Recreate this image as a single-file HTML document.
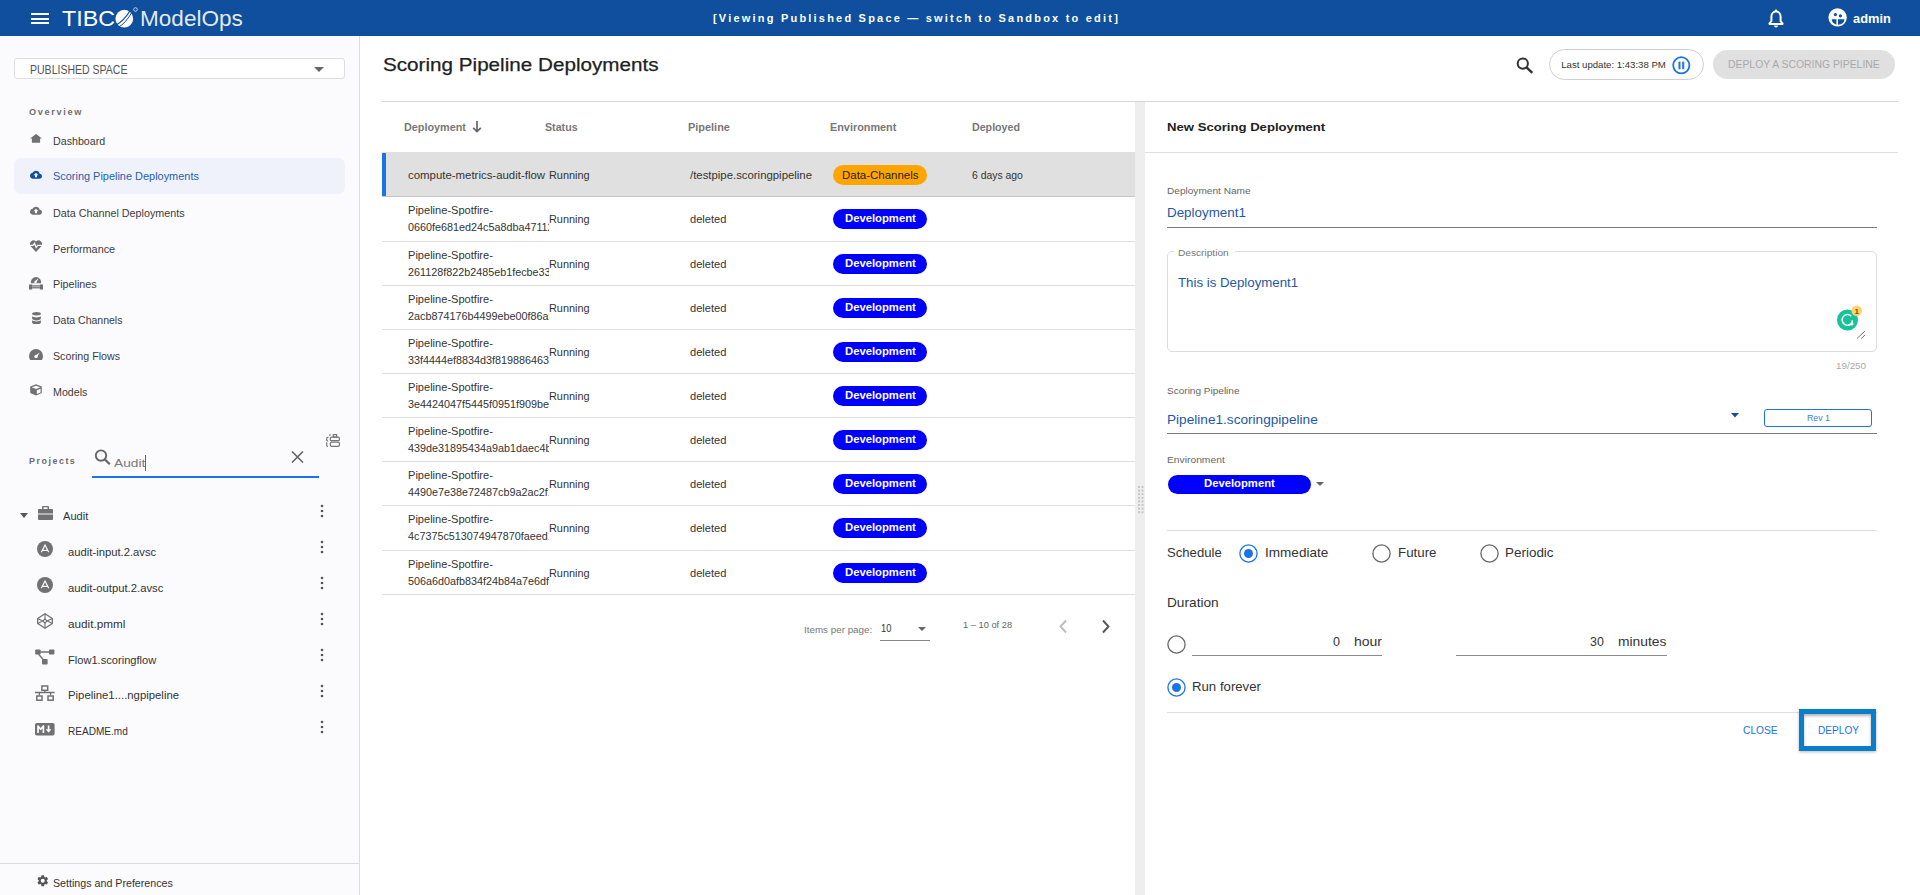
<!DOCTYPE html>
<html><head><meta charset="utf-8"><title>ModelOps</title>
<style>
*{box-sizing:border-box;margin:0;padding:0}
html,body{width:1920px;height:895px;overflow:hidden;background:#fff;font-family:"Liberation Sans",sans-serif;color:#333;position:relative}
.t{position:absolute;white-space:nowrap}
.b{position:absolute}
</style></head><body>
<div class="b" style="left:0;top:0;width:1920px;height:36px;background:#0f4f9e"></div>
<div class="b" style="left:31px;top:12.5px;width:18px;height:2px;background:#fff"></div>
<div class="b" style="left:31px;top:17.5px;width:18px;height:2px;background:#fff"></div>
<div class="b" style="left:31px;top:22px;width:18px;height:2px;background:#fff"></div>
<div class="t" style="left:61.50px;top:7.40px;font-size:22.8px;line-height:22.8px;color:#fff;transform:scaleX(1.0205);transform-origin:0 0;">TIBC</div>
<svg class="b" style="left:112px;top:6px" width="28" height="24" viewBox="0 0 28 24"><circle cx="12.3" cy="12.7" r="8.9" fill="#fff"/><path d="M3.5 19.5 Q12 15 18.5 4" stroke="#0f4f9e" stroke-width="1.3" fill="none"/><path d="M6 21.5 Q14 17 20 6" stroke="#0f4f9e" stroke-width="1" fill="none"/><circle cx="23.5" cy="3.5" r="1.8" fill="none" stroke="#fff" stroke-width="0.7"/></svg>
<div class="t" style="left:140.00px;top:8.08px;font-size:22px;line-height:22px;color:rgba(255,255,255,.9);transform:scaleX(1.0252);transform-origin:0 0;">ModelOps</div>
<div class="t" style="left:712.90px;top:13.64px;font-size:10px;line-height:10px;color:#fff;font-weight:bold;letter-spacing:2.0px;transform:scaleX(1.1008);transform-origin:0 0;">[Viewing Published Space — switch to Sandbox to edit]</div>
<svg class="b" style="left:1768px;top:9px" width="16" height="19" viewBox="0 0 16 19"><path d="M8 2.6c2.8 0 4.6 2.2 4.6 5v4.6l1.9 2.1v.6H1.5v-.6l1.9-2.1V7.6c0-2.8 1.8-5 4.6-5z" stroke="#fff" stroke-width="2" fill="none" stroke-linejoin="round"/><circle cx="8" cy="1.8" r="1.3" fill="#fff"/><path d="M6 16.5h4a2 2 0 0 1-4 0z" fill="#fff"/></svg>
<svg class="b" style="left:1828px;top:8px" width="20" height="20" viewBox="0 0 20 20"><circle cx="9.6" cy="9.4" r="9.2" fill="#fff"/><circle cx="7.4" cy="6.6" r="1.6" fill="#0f4f9e"/><circle cx="12.4" cy="7.8" r="1.6" fill="#0f4f9e"/><path d="M3.6 11.2h13a6.6 6.6 0 0 1-13 0z" fill="#0f4f9e"/><path d="M9.2 11v7" stroke="#fff" stroke-width="1.6"/></svg>
<div class="t" style="left:1853.00px;top:12.00px;font-size:13px;line-height:13px;color:#fff;font-weight:bold;transform:scaleX(0.9874);transform-origin:0 0;">admin</div>
<div class="b" style="left:0;top:36px;width:359px;height:859px;background:#fbfbfd"></div>
<div class="b" style="left:359px;top:36px;width:1px;height:859px;background:#dcdcdc"></div>
<div class="b" style="left:14px;top:58px;width:331px;height:21px;border:1px solid #dedede;border-radius:3px;background:#fff"></div>
<div class="t" style="left:30.00px;top:63.96px;font-size:12.1px;line-height:12.1px;color:#555;transform:scaleX(0.8699);transform-origin:0 0;">PUBLISHED SPACE</div>
<div class="b" style="left:314px;top:67px;width:0;height:0;border-left:5px solid transparent;border-right:5px solid transparent;border-top:5px solid #666"></div>
<div class="t" style="left:29.00px;top:107.34px;font-size:9.4px;line-height:9.4px;color:#707070;font-weight:bold;letter-spacing:1.7px;transform:scaleX(0.9783);transform-origin:0 0;">Overview</div>
<div class="b" style="left:14px;top:158px;width:331px;height:36px;border-radius:7px;background:#f0f2fb"></div>
<div class="t" style="left:53.25px;top:135.73px;font-size:10.6px;line-height:10.6px;color:#3c3c3c;transform:scaleX(1.0076);transform-origin:0 0;">Dashboard</div>
<div class="t" style="left:53.25px;top:171.43px;font-size:10.6px;line-height:10.6px;color:#2660ad;transform:scaleX(1.0324);transform-origin:0 0;">Scoring Pipeline Deployments</div>
<div class="t" style="left:53.25px;top:207.63px;font-size:10.6px;line-height:10.6px;color:#3c3c3c;transform:scaleX(1.0160);transform-origin:0 0;">Data Channel Deployments</div>
<div class="t" style="left:53.25px;top:243.63px;font-size:10.6px;line-height:10.6px;color:#3c3c3c;transform:scaleX(1.0250);transform-origin:0 0;">Performance</div>
<div class="t" style="left:53.25px;top:279.43px;font-size:10.6px;line-height:10.6px;color:#3c3c3c;transform:scaleX(1.0159);transform-origin:0 0;">Pipelines</div>
<div class="t" style="left:53.25px;top:315.33px;font-size:10.6px;line-height:10.6px;color:#3c3c3c;transform:scaleX(0.9911);transform-origin:0 0;">Data Channels</div>
<div class="t" style="left:53.25px;top:351.33px;font-size:10.6px;line-height:10.6px;color:#3c3c3c;transform:scaleX(1.0080);transform-origin:0 0;">Scoring Flows</div>
<div class="t" style="left:53.25px;top:387.43px;font-size:10.6px;line-height:10.6px;color:#3c3c3c;transform:scaleX(1.0067);transform-origin:0 0;">Models</div>
<svg class="b" style="left:30px;top:133px" width="12" height="10" viewBox="0 0 12 10"><path d="M6.07 .9L0 5.5h1.9v4.35h8.2V5.5h1.9z" fill="#717171"/></svg>
<svg class="b" style="left:30px;top:169.5px" width="12" height="9.5" viewBox="0 3.5 24 17"><path d="M19.35 10.04C18.670 6.59 15.64 4 12 4 9.11 4 6.6 5.64 5.35 8.04 2.34 8.36 0 10.91 0 14c0 3.310 2.69 6 6 6h13c2.76 0 5-2.240 5-5 0-2.64-2.05-4.78-4.65-4.96z" fill="#0f4f9e"/><path d="M14 13v4h-4v-4H7l5-5 5 5h-3z" fill="#f0f2fb"/></svg>
<svg class="b" style="left:30px;top:205.5px" width="12" height="9.5" viewBox="0 3.5 24 17"><path d="M19.35 10.04C18.670 6.59 15.64 4 12 4 9.11 4 6.6 5.64 5.35 8.04 2.34 8.36 0 10.91 0 14c0 3.310 2.69 6 6 6h13c2.76 0 5-2.240 5-5 0-2.64-2.05-4.78-4.65-4.96z" fill="#717171"/><path d="M14 13v4h-4v-4H7l5-5 5 5h-3z" fill="#fbfbfd"/></svg>
<svg class="b" style="left:30px;top:240px" width="12" height="12" viewBox="0 0 12 12"><path d="M6 11.9L.9 6.4A3.3 3.3 0 0 1 6 1.6a3.3 3.3 0 0 1 5.1 4.8z" fill="#717171"/><path d="M-.5 5.4h3.6l1.4-2 1.7 4 1.5-2.1h5" stroke="#fbfbfd" stroke-width="1.3" fill="none"/></svg>
<svg class="b" style="left:29px;top:274.5px" width="14" height="15" viewBox="0 0 14 15"><path d="M1.9 8.3A5.2 5.2 0 1 1 12.1 8.3z" fill="#717171"/><path d="M4.6 7.2l4.9-3.9-2.4 5.1z" fill="#fbfbfd"/><rect x="0" y="9.5" width="3.2" height="5" fill="#717171"/><rect x="10.8" y="9.5" width="3.2" height="5" fill="#717171"/><rect x="3.2" y="10.2" width="7.6" height="3.2" fill="#717171"/><rect x="3.2" y="10.9" width="7.6" height="1.4" fill="#b0b0b0"/></svg>
<svg class="b" style="left:31.6px;top:311.6px" width="9" height="12.4" viewBox="0 0 9 12.4"><ellipse cx="4.5" cy="1.7" rx="4.4" ry="1.7" fill="#717171"/><path d="M.1 4.3v2.3c0 1 2 1.8 4.4 1.8s4.4-.8 4.4-1.8V4.3c-1 .8-2.6 1.1-4.4 1.1S1.1 5.100.1 4.3z" fill="#717171"/><path d="M.1 8.3v2.3c0 1 2 1.8 4.4 1.8s4.4-.8 4.4-1.8V8.3c-1 .8-2.6 1.1-4.4 1.1S1.1 9.1.1 8.3z" fill="#717171"/></svg>
<svg class="b" style="left:29px;top:348.5px" width="14" height="11.5" viewBox="0 0 14 11.5"><path d="M7 0A7 7 0 0 0 0 7c0 1.6.5 3.1 1.4 4.4h11.2A7 7 0 0 0 14 7 7 7 0 0 0 7 0z" fill="#717171"/><circle cx="7" cy="7.6" r="1.7" fill="#fbfbfd"/><path d="M6 6.8l4.7-3.3-2.900 5z" fill="#fbfbfd"/></svg>
<svg class="b" style="left:30px;top:384px" width="12" height="11.6" viewBox="0 0 12 11.6"><path d="M6 .2l5.8 2.4v6.5L6 11.4.2 9.1V2.6z" fill="#717171"/><path d="M6 1.7l4.3 1.6L6 4.9 1.7 3.3z" fill="#fbfbfd"/><path d="M6.8 6.2l3.8-1.5v3.9L6.8 10.1z" fill="#fbfbfd"/></svg>
<div class="t" style="left:29.20px;top:457.34px;font-size:8.7px;line-height:8.7px;color:#6a6a6a;font-weight:bold;letter-spacing:1.5px;transform:scaleX(1.0230);transform-origin:0 0;">Projects</div>
<svg class="b" style="left:94px;top:449px" width="17" height="16" viewBox="0 0 17 16"><circle cx="7" cy="6.6" r="5.2" stroke="#666" stroke-width="1.9" fill="none"/><path d="M10.8 10.4l5 4.8" stroke="#666" stroke-width="2.2"/></svg>
<div class="t" style="left:114.00px;top:457.61px;font-size:11.8px;line-height:11.8px;color:#7a7a7a;transform:scaleX(1.1674);transform-origin:0 0;">Audit</div>
<div class="b" style="left:145px;top:455px;width:1px;height:16px;background:#1a73e8"></div>
<svg class="b" style="left:291px;top:451px" width="13" height="12" viewBox="0 0 13 12"><path d="M1 .5l11 11M12 .5L1 11.5" stroke="#666" stroke-width="1.6"/></svg>
<div class="b" style="left:92px;top:476px;width:227px;height:2px;background:#1a73e8"></div>
<svg class="b" style="left:326px;top:434px" width="14" height="13" viewBox="0 0 14 13"><rect x="7.3" y=".6" width="3.3" height="2.6" stroke="#777" stroke-width="1.2" fill="none"/><rect x="4.3" y="3.2" width="9.1" height="3.5" rx="1.3" stroke="#777" stroke-width="1.2" fill="none"/><rect x="4.3" y="8.2" width="9.1" height="4.2" rx="1.3" stroke="#777" stroke-width="1.2" fill="none"/><path d="M2.6 3.3A1.5 1.5 0 0 0 .7 4.8v1.2a1.2 1.2 0 0 0 1.3.9M.7 8.2v3a1.3 1.3 0 0 0 1.2 1.3M3 1.3l1.6-.7" stroke="#777" stroke-width="1.2" fill="none"/></svg>
<div class="b" style="left:20px;top:513px;width:0;height:0;border-left:4.5px solid transparent;border-right:4.5px solid transparent;border-top:5px solid #555"></div>
<svg class="b" style="left:38px;top:506px" width="15" height="14" viewBox="0 0 15 14"><path d="M5 0h5a1 1 0 0 1 1 1v2h3a1 1 0 0 1 1 1v3.5H0V4a1 1 0 0 1 1-1h3V1a1 1 0 0 1 1-1zm.5 1.3V3h4V1.3z" fill="#717171"/><path d="M0 8.5h15V13a1 1 0 0 1-1 1H1a1 1 0 0 1-1-1z" fill="#717171"/></svg>
<div class="t" style="left:62.70px;top:510.63px;font-size:10.6px;line-height:10.6px;color:#333;transform:scaleX(1.0471);transform-origin:0 0;">Audit</div>
<div class="t" style="left:68.20px;top:546.93px;font-size:10.6px;line-height:10.6px;color:#333;transform:scaleX(1.0628);transform-origin:0 0;">audit-input.2.avsc</div>
<div class="t" style="left:68.20px;top:583.03px;font-size:10.6px;line-height:10.6px;color:#333;transform:scaleX(1.0651);transform-origin:0 0;">audit-output.2.avsc</div>
<div class="t" style="left:68.20px;top:618.63px;font-size:10.6px;line-height:10.6px;color:#333;transform:scaleX(1.1053);transform-origin:0 0;">audit.pmml</div>
<div class="t" style="left:68.20px;top:654.63px;font-size:10.6px;line-height:10.6px;color:#333;transform:scaleX(1.0482);transform-origin:0 0;">Flow1.scoringflow</div>
<div class="t" style="left:68.20px;top:690.33px;font-size:10.6px;line-height:10.6px;color:#333;transform:scaleX(1.0711);transform-origin:0 0;">Pipeline1....ngpipeline</div>
<div class="t" style="left:68.20px;top:726.43px;font-size:10.6px;line-height:10.6px;color:#333;transform:scaleX(0.9489);transform-origin:0 0;">README.md</div>
<svg class="b" style="left:37px;top:541px" width="16" height="16" viewBox="0 0 16 16"><circle cx="8" cy="8" r="8" fill="#717171"/><path d="M4.3 11.3L8 4l3.7 7.3M5.2 9.3h5.6" stroke="#fbfbfd" stroke-width="1.2" fill="none"/></svg>
<svg class="b" style="left:37px;top:577px" width="16" height="16" viewBox="0 0 16 16"><circle cx="8" cy="8" r="8" fill="#717171"/><path d="M4.3 11.3L8 4l3.7 7.3M5.2 9.3h5.6" stroke="#fbfbfd" stroke-width="1.2" fill="none"/></svg>
<svg class="b" style="left:37px;top:613px" width="16" height="16" viewBox="0 0 16 16"><path d="M8 .7l7.3 4.8v5L8 15.3.7 10.5v-5z" stroke="#717171" stroke-width="1.3" fill="none" stroke-linejoin="round"/><path d="M8 .7v5.3M8 10v5.3M.7 5.5L5.8 8 .7 10.5M15.3 5.5L10.2 8l5.1 2.5" stroke="#717171" stroke-width="1.1" fill="none"/><path d="M5.8 8L8 6.1 10.2 8 8 9.9z" stroke="#717171" stroke-width="1.1" fill="none"/></svg>
<svg class="b" style="left:35px;top:649px" width="20" height="16" viewBox="0 0 20 16"><rect x=".2" y=".5" width="5.4" height="5" rx=".8" fill="#717171"/><rect x="14" y=".5" width="5.4" height="5" rx=".8" fill="#717171"/><rect x="7" y="10" width="5.6" height="5.6" rx=".8" fill="#717171"/><path d="M5 3h9.5M3.5 5l5 6" stroke="#717171" stroke-width="1.3"/></svg>
<svg class="b" style="left:35px;top:685px" width="20" height="16" viewBox="0 0 20 16"><rect x="6.9" y="1" width="5.8" height="4.3" stroke="#717171" stroke-width="1.5" fill="none"/><path d="M9.8 5.3v2.2M0 7.5h19.6M4.4 7.5v3M15.6 7.5v3" stroke="#717171" stroke-width="1.3" fill="none"/><rect x="1.8" y="11" width="5.2" height="4.2" stroke="#717171" stroke-width="1.5" fill="none"/><rect x="13" y="11" width="5.2" height="4.2" stroke="#717171" stroke-width="1.5" fill="none"/></svg>
<svg class="b" style="left:35px;top:722.5px" width="20" height="13" viewBox="0 0 20 13"><rect x="0" y="0" width="19.6" height="12.5" rx="1.8" fill="#717171"/><path d="M3 10V3l2.7 3.3L8.4 3v7" stroke="#fbfbfd" stroke-width="1.7" fill="none" stroke-linejoin="round"/><path d="M13.6 2.5v5.5" stroke="#fbfbfd" stroke-width="1.7"/><path d="M10.8 6.3h5.6l-2.8 3.5z" fill="#fbfbfd"/></svg>
<svg class="b" style="left:320px;top:504px" width="4" height="14" viewBox="0 0 4 14"><circle cx="2" cy="2" r="1.3" fill="#555"/><circle cx="2" cy="7" r="1.3" fill="#555"/><circle cx="2" cy="12" r="1.3" fill="#555"/></svg>
<svg class="b" style="left:320px;top:540px" width="4" height="14" viewBox="0 0 4 14"><circle cx="2" cy="2" r="1.3" fill="#555"/><circle cx="2" cy="7" r="1.3" fill="#555"/><circle cx="2" cy="12" r="1.3" fill="#555"/></svg>
<svg class="b" style="left:320px;top:576px" width="4" height="14" viewBox="0 0 4 14"><circle cx="2" cy="2" r="1.3" fill="#555"/><circle cx="2" cy="7" r="1.3" fill="#555"/><circle cx="2" cy="12" r="1.3" fill="#555"/></svg>
<svg class="b" style="left:320px;top:612px" width="4" height="14" viewBox="0 0 4 14"><circle cx="2" cy="2" r="1.3" fill="#555"/><circle cx="2" cy="7" r="1.3" fill="#555"/><circle cx="2" cy="12" r="1.3" fill="#555"/></svg>
<svg class="b" style="left:320px;top:648px" width="4" height="14" viewBox="0 0 4 14"><circle cx="2" cy="2" r="1.3" fill="#555"/><circle cx="2" cy="7" r="1.3" fill="#555"/><circle cx="2" cy="12" r="1.3" fill="#555"/></svg>
<svg class="b" style="left:320px;top:684px" width="4" height="14" viewBox="0 0 4 14"><circle cx="2" cy="2" r="1.3" fill="#555"/><circle cx="2" cy="7" r="1.3" fill="#555"/><circle cx="2" cy="12" r="1.3" fill="#555"/></svg>
<svg class="b" style="left:320px;top:720px" width="4" height="14" viewBox="0 0 4 14"><circle cx="2" cy="2" r="1.3" fill="#555"/><circle cx="2" cy="7" r="1.3" fill="#555"/><circle cx="2" cy="12" r="1.3" fill="#555"/></svg>
<div class="b" style="left:0;top:863px;width:359px;height:1px;background:#dcdcdc"></div>
<svg class="b" style="left:36px;top:874px" width="13.5" height="13.5" viewBox="0 0 24 24"><path fill="#555" d="M19.14 12.94c.04-.3.06-.61.06-.94 0-.32-.02-.64-.07-.94l2.03-1.58a.49.49 0 0 0 .12-.61l-1.92-3.32a.49.49 0 0 0-.59-.22l-2.39.96c-.5-.38-1.03-.7-1.62-.94l-.36-2.540a.48.48 0 0 0-.48-.41h-3.84c-.24 0-.43.17-.47.41l-.36 2.54c-.59.24-1.130.57-1.62.94l-2.39-.96a.48.48 0 0 0-.59.22L2.74 8.87c-.12.21-.08.47.12.61l2.03 1.58c-.05.3-.09.63-.09.94s.02.64.07.94l-2.03 1.58a.49.49 0 0 0-.12.61l1.92 3.32c.12.22.37.29.59.22l2.39-.96c.5.38 1.03.7 1.62.94l.36 2.54c.05.24.24.41.48.41h3.84c.24 0 .44-.17.47-.41l.36-2.54c.59-.24 1.13-.56 1.62-.94l2.39.96c.22.08.47 0 .59-.22l1.92-3.32c.12-.22.07-.47-.12-.61l-2.01-1.58zM12 15.6A3.6 3.6 0 1 1 12 8.4a3.6 3.6 0 0 1 0 7.2z"/></svg>
<div class="t" style="left:53.30px;top:878.13px;font-size:10.6px;line-height:10.6px;color:#333;transform:scaleX(1.0073);transform-origin:0 0;">Settings and Preferences</div>
<div class="t" style="left:382.50px;top:55.69px;font-size:18.8px;line-height:18.8px;color:#212121;transform:scaleX(1.0997);transform-origin:0 0;-webkit-text-stroke:0.25px #212121;">Scoring Pipeline Deployments</div>
<svg class="b" style="left:1516px;top:57px" width="18" height="17" viewBox="0 0 18 17"><circle cx="6.8" cy="6.6" r="5.1" stroke="#333" stroke-width="2" fill="none"/><path d="M10.5 10.3l5.8 5.6" stroke="#333" stroke-width="2.4"/></svg>
<div class="b" style="left:1549px;top:49px;width:155px;height:31px;border:1px solid #d0d0d0;border-radius:16px;background:#fff"></div>
<div class="t" style="left:1561.25px;top:60.47px;font-size:9.6px;line-height:9.6px;color:#333;">Last update: 1:43:38 PM</div>
<svg class="b" style="left:1672px;top:56px" width="19" height="19" viewBox="0 0 19 19"><circle cx="9.3" cy="9.3" r="8.1" stroke="#1a73e8" stroke-width="1.8" fill="none"/><rect x="6.5" y="5.6" width="2" height="7.6" fill="#1a73e8"/><rect x="10.2" y="5.6" width="2" height="7.6" fill="#1a73e8"/></svg>
<div class="b" style="left:1713px;top:50px;width:182px;height:29px;border-radius:15px;background:#e0e0e0"></div>
<div class="t" style="left:1728.25px;top:59.01px;font-size:11.8px;line-height:11.8px;color:#a9a9a9;transform:scaleX(0.8809);transform-origin:0 0;">DEPLOY A SCORING PIPELINE</div>
<div class="b" style="left:382px;top:101px;width:1516px;height:1px;background:#d6d6d6"></div>
<div class="t" style="left:403.75px;top:122.03px;font-size:10.6px;line-height:10.6px;color:#777;font-weight:bold;transform:scaleX(1.0203);transform-origin:0 0;">Deployment</div>
<div class="t" style="left:545.40px;top:122.03px;font-size:10.6px;line-height:10.6px;color:#777;font-weight:bold;transform:scaleX(1.0063);transform-origin:0 0;">Status</div>
<div class="t" style="left:687.70px;top:122.03px;font-size:10.6px;line-height:10.6px;color:#777;font-weight:bold;transform:scaleX(1.0309);transform-origin:0 0;">Pipeline</div>
<div class="t" style="left:830.00px;top:122.03px;font-size:10.6px;line-height:10.6px;color:#777;font-weight:bold;transform:scaleX(1.0249);transform-origin:0 0;">Environment</div>
<div class="t" style="left:972.00px;top:122.03px;font-size:10.6px;line-height:10.6px;color:#777;font-weight:bold;transform:scaleX(1.0060);transform-origin:0 0;">Deployed</div>
<svg class="b" style="left:472px;top:121px" width="10" height="12" viewBox="0 0 10 12"><path d="M5 0v10.5M1.2 6.8L5 10.6 8.8 6.8" stroke="#666" stroke-width="1.7" fill="none"/></svg>
<div class="b" style="left:382px;top:152px;width:753px;height:44px;background:#e0e0e0"></div>
<div class="b" style="left:382px;top:153px;width:4px;height:43px;background:#1a73e8"></div>
<div class="b" style="left:382px;top:196px;width:753px;height:1px;background:#c6c6c6"></div>
<div class="b" style="left:382px;top:241px;width:753px;height:1px;background:#e0e0e0"></div>
<div class="b" style="left:382px;top:285px;width:753px;height:1px;background:#e0e0e0"></div>
<div class="b" style="left:382px;top:329px;width:753px;height:1px;background:#e0e0e0"></div>
<div class="b" style="left:382px;top:373px;width:753px;height:1px;background:#e0e0e0"></div>
<div class="b" style="left:382px;top:417px;width:753px;height:1px;background:#e0e0e0"></div>
<div class="b" style="left:382px;top:461px;width:753px;height:1px;background:#e0e0e0"></div>
<div class="b" style="left:382px;top:505px;width:753px;height:1px;background:#e0e0e0"></div>
<div class="b" style="left:382px;top:550px;width:753px;height:1px;background:#e0e0e0"></div>
<div class="b" style="left:382px;top:594px;width:753px;height:1px;background:#e0e0e0"></div>
<div class="t" style="left:408.20px;top:170.11px;font-size:10.5px;line-height:10.5px;color:#333;transform:scaleX(1.0870);transform-origin:0 0;">compute-metrics-audit-flow</div>
<div class="t" style="left:549.30px;top:170.11px;font-size:10.5px;line-height:10.5px;color:#333;transform:scaleX(1.0380);transform-origin:0 0;">Running</div>
<div class="t" style="left:690.00px;top:170.11px;font-size:10.5px;line-height:10.5px;color:#333;transform:scaleX(1.0829);transform-origin:0 0;">/testpipe.scoringpipeline</div>
<div class="b" style="left:833px;top:165px;width:94px;height:20px;border-radius:10px;background:#ffa500"></div>
<div class="t" style="left:841.80px;top:169.69px;font-size:11px;line-height:11px;color:#222;transform:scaleX(1.0412);transform-origin:0 0;">Data-Channels</div>
<div class="t" style="left:972.30px;top:170.11px;font-size:10.5px;line-height:10.5px;color:#333;transform:scaleX(0.9908);transform-origin:0 0;">6 days ago</div>
<div class="b" style="left:408px;top:199px;width:141px;height:40px;overflow:hidden">
<div class="t" style="left:0.20px;top:5.81px;font-size:10.5px;line-height:10.5px;color:#333;transform:scaleX(1.0541);transform-origin:0 0;">Pipeline-Spotfire-</div>
<div class="t" style="left:0.20px;top:23.11px;font-size:10.5px;line-height:10.5px;color:#333;transform:scaleX(1.0275);transform-origin:0 0;">0660fe681ed24c5a8dba471122</div>
</div>
<div class="t" style="left:549.30px;top:213.91px;font-size:10.5px;line-height:10.5px;color:#333;transform:scaleX(1.0380);transform-origin:0 0;">Running</div>
<div class="t" style="left:690.00px;top:213.91px;font-size:10.5px;line-height:10.5px;color:#333;transform:scaleX(1.0595);transform-origin:0 0;">deleted</div>
<div class="b" style="left:833px;top:209px;width:94px;height:20px;border-radius:10px;background:#0000fe"></div>
<div class="t" style="left:844.60px;top:212.97px;font-size:11.5px;line-height:11.5px;color:#fff;font-weight:bold;transform:scaleX(0.9804);transform-origin:0 0;">Development</div>
<div class="b" style="left:408px;top:244px;width:141px;height:40px;overflow:hidden">
<div class="t" style="left:0.20px;top:5.81px;font-size:10.5px;line-height:10.5px;color:#333;transform:scaleX(1.0541);transform-origin:0 0;">Pipeline-Spotfire-</div>
<div class="t" style="left:0.20px;top:23.11px;font-size:10.5px;line-height:10.5px;color:#333;transform:scaleX(1.0275);transform-origin:0 0;">261128f822b2485eb1fecbe33f</div>
</div>
<div class="t" style="left:549.30px;top:258.91px;font-size:10.5px;line-height:10.5px;color:#333;transform:scaleX(1.0380);transform-origin:0 0;">Running</div>
<div class="t" style="left:690.00px;top:258.91px;font-size:10.5px;line-height:10.5px;color:#333;transform:scaleX(1.0595);transform-origin:0 0;">deleted</div>
<div class="b" style="left:833px;top:254px;width:94px;height:20px;border-radius:10px;background:#0000fe"></div>
<div class="t" style="left:844.60px;top:257.97px;font-size:11.5px;line-height:11.5px;color:#fff;font-weight:bold;transform:scaleX(0.9804);transform-origin:0 0;">Development</div>
<div class="b" style="left:408px;top:288px;width:141px;height:40px;overflow:hidden">
<div class="t" style="left:0.20px;top:5.81px;font-size:10.5px;line-height:10.5px;color:#333;transform:scaleX(1.0541);transform-origin:0 0;">Pipeline-Spotfire-</div>
<div class="t" style="left:0.20px;top:23.11px;font-size:10.5px;line-height:10.5px;color:#333;transform:scaleX(1.0275);transform-origin:0 0;">2acb874176b4499ebe00f86a9c</div>
</div>
<div class="t" style="left:549.30px;top:302.91px;font-size:10.5px;line-height:10.5px;color:#333;transform:scaleX(1.0380);transform-origin:0 0;">Running</div>
<div class="t" style="left:690.00px;top:302.91px;font-size:10.5px;line-height:10.5px;color:#333;transform:scaleX(1.0595);transform-origin:0 0;">deleted</div>
<div class="b" style="left:833px;top:298px;width:94px;height:20px;border-radius:10px;background:#0000fe"></div>
<div class="t" style="left:844.60px;top:301.97px;font-size:11.5px;line-height:11.5px;color:#fff;font-weight:bold;transform:scaleX(0.9804);transform-origin:0 0;">Development</div>
<div class="b" style="left:408px;top:332px;width:141px;height:40px;overflow:hidden">
<div class="t" style="left:0.20px;top:5.81px;font-size:10.5px;line-height:10.5px;color:#333;transform:scaleX(1.0541);transform-origin:0 0;">Pipeline-Spotfire-</div>
<div class="t" style="left:0.20px;top:23.11px;font-size:10.5px;line-height:10.5px;color:#333;transform:scaleX(1.0275);transform-origin:0 0;">33f4444ef8834d3f8198864637a</div>
</div>
<div class="t" style="left:549.30px;top:346.91px;font-size:10.5px;line-height:10.5px;color:#333;transform:scaleX(1.0380);transform-origin:0 0;">Running</div>
<div class="t" style="left:690.00px;top:346.91px;font-size:10.5px;line-height:10.5px;color:#333;transform:scaleX(1.0595);transform-origin:0 0;">deleted</div>
<div class="b" style="left:833px;top:342px;width:94px;height:20px;border-radius:10px;background:#0000fe"></div>
<div class="t" style="left:844.60px;top:345.97px;font-size:11.5px;line-height:11.5px;color:#fff;font-weight:bold;transform:scaleX(0.9804);transform-origin:0 0;">Development</div>
<div class="b" style="left:408px;top:376px;width:141px;height:40px;overflow:hidden">
<div class="t" style="left:0.20px;top:5.81px;font-size:10.5px;line-height:10.5px;color:#333;transform:scaleX(1.0541);transform-origin:0 0;">Pipeline-Spotfire-</div>
<div class="t" style="left:0.20px;top:23.11px;font-size:10.5px;line-height:10.5px;color:#333;transform:scaleX(1.0275);transform-origin:0 0;">3e4424047f5445f0951f909bel</div>
</div>
<div class="t" style="left:549.30px;top:390.91px;font-size:10.5px;line-height:10.5px;color:#333;transform:scaleX(1.0380);transform-origin:0 0;">Running</div>
<div class="t" style="left:690.00px;top:390.91px;font-size:10.5px;line-height:10.5px;color:#333;transform:scaleX(1.0595);transform-origin:0 0;">deleted</div>
<div class="b" style="left:833px;top:386px;width:94px;height:20px;border-radius:10px;background:#0000fe"></div>
<div class="t" style="left:844.60px;top:389.97px;font-size:11.5px;line-height:11.5px;color:#fff;font-weight:bold;transform:scaleX(0.9804);transform-origin:0 0;">Development</div>
<div class="b" style="left:408px;top:420px;width:141px;height:40px;overflow:hidden">
<div class="t" style="left:0.20px;top:5.81px;font-size:10.5px;line-height:10.5px;color:#333;transform:scaleX(1.0541);transform-origin:0 0;">Pipeline-Spotfire-</div>
<div class="t" style="left:0.20px;top:23.11px;font-size:10.5px;line-height:10.5px;color:#333;transform:scaleX(1.0275);transform-origin:0 0;">439de31895434a9ab1daec4b1</div>
</div>
<div class="t" style="left:549.30px;top:434.91px;font-size:10.5px;line-height:10.5px;color:#333;transform:scaleX(1.0380);transform-origin:0 0;">Running</div>
<div class="t" style="left:690.00px;top:434.91px;font-size:10.5px;line-height:10.5px;color:#333;transform:scaleX(1.0595);transform-origin:0 0;">deleted</div>
<div class="b" style="left:833px;top:430px;width:94px;height:20px;border-radius:10px;background:#0000fe"></div>
<div class="t" style="left:844.60px;top:433.97px;font-size:11.5px;line-height:11.5px;color:#fff;font-weight:bold;transform:scaleX(0.9804);transform-origin:0 0;">Development</div>
<div class="b" style="left:408px;top:464px;width:141px;height:40px;overflow:hidden">
<div class="t" style="left:0.20px;top:5.81px;font-size:10.5px;line-height:10.5px;color:#333;transform:scaleX(1.0541);transform-origin:0 0;">Pipeline-Spotfire-</div>
<div class="t" style="left:0.20px;top:23.11px;font-size:10.5px;line-height:10.5px;color:#333;transform:scaleX(1.0275);transform-origin:0 0;">4490e7e38e72487cb9a2ac2f1a</div>
</div>
<div class="t" style="left:549.30px;top:478.91px;font-size:10.5px;line-height:10.5px;color:#333;transform:scaleX(1.0380);transform-origin:0 0;">Running</div>
<div class="t" style="left:690.00px;top:478.91px;font-size:10.5px;line-height:10.5px;color:#333;transform:scaleX(1.0595);transform-origin:0 0;">deleted</div>
<div class="b" style="left:833px;top:474px;width:94px;height:20px;border-radius:10px;background:#0000fe"></div>
<div class="t" style="left:844.60px;top:477.97px;font-size:11.5px;line-height:11.5px;color:#fff;font-weight:bold;transform:scaleX(0.9804);transform-origin:0 0;">Development</div>
<div class="b" style="left:408px;top:508px;width:141px;height:40px;overflow:hidden">
<div class="t" style="left:0.20px;top:5.81px;font-size:10.5px;line-height:10.5px;color:#333;transform:scaleX(1.0541);transform-origin:0 0;">Pipeline-Spotfire-</div>
<div class="t" style="left:0.20px;top:23.11px;font-size:10.5px;line-height:10.5px;color:#333;transform:scaleX(1.0275);transform-origin:0 0;">4c7375c513074947870faeed1b</div>
</div>
<div class="t" style="left:549.30px;top:522.91px;font-size:10.5px;line-height:10.5px;color:#333;transform:scaleX(1.0380);transform-origin:0 0;">Running</div>
<div class="t" style="left:690.00px;top:522.91px;font-size:10.5px;line-height:10.5px;color:#333;transform:scaleX(1.0595);transform-origin:0 0;">deleted</div>
<div class="b" style="left:833px;top:518px;width:94px;height:20px;border-radius:10px;background:#0000fe"></div>
<div class="t" style="left:844.60px;top:521.97px;font-size:11.5px;line-height:11.5px;color:#fff;font-weight:bold;transform:scaleX(0.9804);transform-origin:0 0;">Development</div>
<div class="b" style="left:408px;top:553px;width:141px;height:40px;overflow:hidden">
<div class="t" style="left:0.20px;top:5.81px;font-size:10.5px;line-height:10.5px;color:#333;transform:scaleX(1.0541);transform-origin:0 0;">Pipeline-Spotfire-</div>
<div class="t" style="left:0.20px;top:23.11px;font-size:10.5px;line-height:10.5px;color:#333;transform:scaleX(1.0275);transform-origin:0 0;">506a6d0afb834f24b84a7e6df3</div>
</div>
<div class="t" style="left:549.30px;top:567.91px;font-size:10.5px;line-height:10.5px;color:#333;transform:scaleX(1.0380);transform-origin:0 0;">Running</div>
<div class="t" style="left:690.00px;top:567.91px;font-size:10.5px;line-height:10.5px;color:#333;transform:scaleX(1.0595);transform-origin:0 0;">deleted</div>
<div class="b" style="left:833px;top:563px;width:94px;height:20px;border-radius:10px;background:#0000fe"></div>
<div class="t" style="left:844.60px;top:566.97px;font-size:11.5px;line-height:11.5px;color:#fff;font-weight:bold;transform:scaleX(0.9804);transform-origin:0 0;">Development</div>
<div class="t" style="left:804.40px;top:625.34px;font-size:9.4px;line-height:9.4px;color:#777;transform:scaleX(1.0472);transform-origin:0 0;">Items per page:</div>
<div class="t" style="left:880.70px;top:624.37px;font-size:10.2px;line-height:10.2px;color:#333;transform:scaleX(0.9078);transform-origin:0 0;">10</div>
<div class="b" style="left:918px;top:627px;width:0;height:0;border-left:4.5px solid transparent;border-right:4.5px solid transparent;border-top:4.5px solid #666"></div>
<div class="b" style="left:880px;top:640px;width:50px;height:1px;background:#888"></div>
<div class="t" style="left:963.40px;top:621.35px;font-size:8.8px;line-height:8.8px;color:#666;transform:scaleX(1.0563);transform-origin:0 0;">1 – 10 of 28</div>
<svg class="b" style="left:1058px;top:619px" width="10" height="15" viewBox="0 0 10 15"><path d="M8 1.5L2.5 7.5 8 13.5" stroke="#bdbdbd" stroke-width="1.9" fill="none"/></svg>
<svg class="b" style="left:1101px;top:619px" width="10" height="15" viewBox="0 0 10 15"><path d="M2 1.5l5.5 6L2 13.5" stroke="#555" stroke-width="1.9" fill="none"/></svg>
<div class="b" style="left:1135px;top:102px;width:10px;height:793px;background:#eeeeee"></div>
<svg class="b" style="left:1138px;top:486px" width="6" height="28" viewBox="0 0 6 28"><g fill="#c6c6c6"><rect x="0" y="0.0" width="2" height="2"/><rect x="3.5" y="0.0" width="2" height="2"/><rect x="0" y="3.6" width="2" height="2"/><rect x="3.5" y="3.6" width="2" height="2"/><rect x="0" y="7.2" width="2" height="2"/><rect x="3.5" y="7.2" width="2" height="2"/><rect x="0" y="10.8" width="2" height="2"/><rect x="3.5" y="10.8" width="2" height="2"/><rect x="0" y="14.4" width="2" height="2"/><rect x="3.5" y="14.4" width="2" height="2"/><rect x="0" y="18.0" width="2" height="2"/><rect x="3.5" y="18.0" width="2" height="2"/><rect x="0" y="21.6" width="2" height="2"/><rect x="3.5" y="21.6" width="2" height="2"/><rect x="0" y="25.2" width="2" height="2"/><rect x="3.5" y="25.2" width="2" height="2"/></g></svg>
<div class="t" style="left:1167.20px;top:120.80px;font-size:11.7px;line-height:11.7px;color:#222;font-weight:bold;transform:scaleX(1.1228);transform-origin:0 0;">New Scoring Deployment</div>
<div class="b" style="left:1145px;top:152px;width:753px;height:1px;background:#e0e0e0"></div>
<div class="t" style="left:1167.40px;top:187.37px;font-size:8.9px;line-height:8.9px;color:#666;transform:scaleX(1.1370);transform-origin:0 0;">Deployment Name</div>
<div class="t" style="left:1167.40px;top:207.37px;font-size:12.2px;line-height:12.2px;color:#1f58a6;transform:scaleX(1.0990);transform-origin:0 0;">Deployment1</div>
<div class="b" style="left:1167px;top:227px;width:710px;height:1px;background:#7a7a7a"></div>
<div class="b" style="left:1167px;top:251px;width:710px;height:101px;border:1px solid #dcdcdc;border-radius:5px"></div>
<div class="b" style="left:1174px;top:247px;width:61px;height:8px;background:#fff"></div>
<div class="t" style="left:1177.50px;top:249.17px;font-size:8.9px;line-height:8.9px;color:#777;transform:scaleX(1.1411);transform-origin:0 0;">Description</div>
<div class="t" style="left:1177.70px;top:276.67px;font-size:12.2px;line-height:12.2px;color:#1f58a6;transform:scaleX(1.0885);transform-origin:0 0;">This is Deployment1</div>
<svg class="b" style="left:1836px;top:304px" width="30" height="36" viewBox="0 0 30 36"><circle cx="11.5" cy="16" r="10.5" fill="#15c39a"/><path d="M15.3 12.2A5.3 5.3 0 1 0 16.5 17.5" stroke="#fff" stroke-width="1.5" fill="none"/><path d="M12.3 20.8l4.3-.3-.5-4.2" stroke="#fff" stroke-width="1.5" fill="none"/><circle cx="20.8" cy="6.7" r="5.3" fill="#fdd36b"/><text x="20.8" y="9.7" font-size="8" font-family="Liberation Sans" font-weight="bold" fill="#7a5200" text-anchor="middle">1</text><path d="M21 34.5l8-7.5M25.3 34.5l3.7-3.5" stroke="#555" stroke-width="0.8"/></svg>
<div class="t" style="left:1836.00px;top:362.47px;font-size:8.3px;line-height:8.3px;color:#aaa;transform:scaleX(1.1817);transform-origin:0 0;">19/250</div>
<div class="t" style="left:1167.40px;top:387.37px;font-size:8.9px;line-height:8.9px;color:#666;transform:scaleX(1.1303);transform-origin:0 0;">Scoring Pipeline</div>
<div class="t" style="left:1167.40px;top:413.57px;font-size:12.2px;line-height:12.2px;color:#1f58a6;transform:scaleX(1.1180);transform-origin:0 0;">Pipeline1.scoringpipeline</div>
<svg class="b" style="left:1731px;top:413px" width="8" height="5" viewBox="0 0 8 5"><path d="M0 0h8L4 4.5z" fill="#0f4f9e"/></svg>
<div class="b" style="left:1764px;top:409px;width:108px;height:18px;border:1.5px solid #1a73e8;border-radius:3px"></div>
<div class="t" style="left:1806.80px;top:414.24px;font-size:8.7px;line-height:8.7px;color:#3a7fd5;transform:scaleX(1.0120);transform-origin:0 0;">Rev 1</div>
<div class="b" style="left:1167px;top:433px;width:710px;height:1px;background:#7a7a7a"></div>
<div class="t" style="left:1167.40px;top:455.57px;font-size:8.9px;line-height:8.9px;color:#666;transform:scaleX(1.1588);transform-origin:0 0;">Environment</div>
<div class="b" style="left:1168px;top:475px;width:143px;height:19px;border-radius:10px;background:#0000fe"></div>
<div class="t" style="left:1204.30px;top:478.07px;font-size:11.5px;line-height:11.5px;color:#fff;font-weight:bold;transform:scaleX(0.9804);transform-origin:0 0;">Development</div>
<div class="b" style="left:1316px;top:482px;width:0;height:0;border-left:4.5px solid transparent;border-right:4.5px solid transparent;border-top:4.5px solid #666"></div>
<div class="b" style="left:1167px;top:530px;width:710px;height:1px;background:#e0e0e0"></div>
<div class="t" style="left:1167.10px;top:546.76px;font-size:12.1px;line-height:12.1px;color:#333;transform:scaleX(1.0841);transform-origin:0 0;">Schedule</div>
<svg class="b" style="left:1238.5px;top:543.5px" width="19" height="19" viewBox="0 0 19 19"><circle cx="9.5" cy="9.5" r="8.6" stroke="#1a73e8" stroke-width="1.3" fill="none"/><circle cx="9.5" cy="9.5" r="4.5" fill="#1a73e8"/></svg>
<div class="t" style="left:1264.90px;top:547.36px;font-size:12.1px;line-height:12.1px;color:#333;transform:scaleX(1.1206);transform-origin:0 0;">Immediate</div>
<svg class="b" style="left:1371.5px;top:543.5px" width="19" height="19" viewBox="0 0 19 19"><circle cx="9.5" cy="9.5" r="8.6" stroke="#666" stroke-width="1.3" fill="none"/></svg>
<div class="t" style="left:1397.50px;top:547.36px;font-size:12.1px;line-height:12.1px;color:#333;transform:scaleX(1.1009);transform-origin:0 0;">Future</div>
<svg class="b" style="left:1479.5px;top:543.5px" width="19" height="19" viewBox="0 0 19 19"><circle cx="9.5" cy="9.5" r="8.6" stroke="#666" stroke-width="1.3" fill="none"/></svg>
<div class="t" style="left:1505.30px;top:547.36px;font-size:12.1px;line-height:12.1px;color:#333;transform:scaleX(1.1117);transform-origin:0 0;">Periodic</div>
<div class="t" style="left:1167.10px;top:596.96px;font-size:12.1px;line-height:12.1px;color:#333;transform:scaleX(1.1304);transform-origin:0 0;">Duration</div>
<svg class="b" style="left:1166.5px;top:634.5px" width="19" height="19" viewBox="0 0 19 19"><circle cx="9.5" cy="9.5" r="8.6" stroke="#666" stroke-width="1.3" fill="none"/></svg>
<div class="b" style="left:1192px;top:655px;width:190px;height:1px;background:#8a8a8a"></div>
<div class="t" style="left:1333.00px;top:636.26px;font-size:12.1px;line-height:12.1px;color:#333;transform:scaleX(1.0402);transform-origin:0 0;">0</div>
<div class="t" style="left:1354.00px;top:636.26px;font-size:12.1px;line-height:12.1px;color:#333;transform:scaleX(1.1561);transform-origin:0 0;">hour</div>
<div class="b" style="left:1456px;top:655px;width:211px;height:1px;background:#8a8a8a"></div>
<div class="t" style="left:1589.70px;top:636.26px;font-size:12.1px;line-height:12.1px;color:#333;transform:scaleX(1.0253);transform-origin:0 0;">30</div>
<div class="t" style="left:1618.00px;top:636.26px;font-size:12.1px;line-height:12.1px;color:#333;transform:scaleX(1.1447);transform-origin:0 0;">minutes</div>
<svg class="b" style="left:1166.5px;top:677.5px" width="19" height="19" viewBox="0 0 19 19"><circle cx="9.5" cy="9.5" r="8.6" stroke="#1a73e8" stroke-width="1.3" fill="none"/><circle cx="9.5" cy="9.5" r="4.5" fill="#1a73e8"/></svg>
<div class="t" style="left:1192.00px;top:680.96px;font-size:12.1px;line-height:12.1px;color:#333;transform:scaleX(1.0914);transform-origin:0 0;">Run forever</div>
<div class="b" style="left:1167px;top:712px;width:710px;height:1px;background:#e0e0e0"></div>
<div class="t" style="left:1743.30px;top:724.61px;font-size:11.8px;line-height:11.8px;color:#1a73e8;transform:scaleX(0.8674);transform-origin:0 0;">CLOSE</div>
<div class="b" style="left:1799px;top:709px;width:77px;height:42px;border:5px solid #0a7ecb;box-shadow:0 1px 3px rgba(0,0,0,.28), inset 0 2px 3px rgba(0,0,0,.3)"></div>
<div class="t" style="left:1818.00px;top:724.61px;font-size:11.8px;line-height:11.8px;color:#1a73e8;transform:scaleX(0.8564);transform-origin:0 0;">DEPLOY</div>
</body></html>
